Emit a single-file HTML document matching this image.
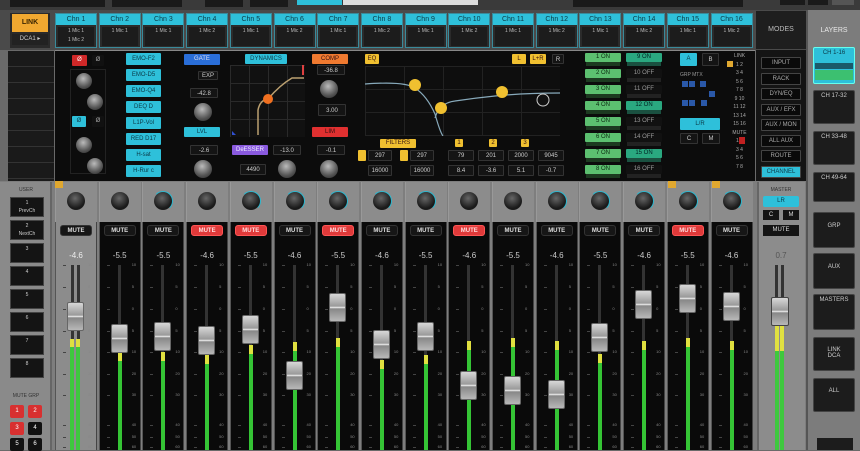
<!DOCTYPE html><html><head><meta charset="utf-8"><style>
*{box-sizing:border-box;margin:0;padding:0}
body{width:860px;height:450px;overflow:hidden;background:#6a6a6a;font-family:"Liberation Sans",sans-serif;position:relative}
.a{position:absolute}
.t{font-size:7px;color:#ddd;text-align:center;white-space:nowrap}
.cy{background:#2ec0da;color:#0b3a48}
.btn{position:absolute;font-size:6px;text-align:center;line-height:11px;border-radius:1px}
.knob{position:absolute;border-radius:50%;background:radial-gradient(circle at 45% 35%,#bbb,#555 60%,#222);}
.dk{position:absolute;border-radius:50%;background:radial-gradient(circle at 45% 35%,#666,#1a1a1a 65%);}
</style></head><body>
<div class="a" style="left:0;top:0;width:860px;height:10px;background:#3a3a3a"></div>
<div class="a" style="left:10px;top:0;width:95px;height:7px;background:#1a1a1a"></div>
<div class="a" style="left:112px;top:0;width:70px;height:7px;background:#1a1a1a"></div>
<div class="a" style="left:205px;top:0;width:38px;height:7px;background:#1a1a1a"></div>
<div class="a" style="left:250px;top:0;width:38px;height:7px;background:#1a1a1a"></div>
<div class="a" style="left:297px;top:0;width:45px;height:5px;background:#2ec0da"></div>
<div class="a" style="left:343px;top:0;width:90px;height:5px;background:#ddd"></div>
<div class="a" style="left:433px;top:0;width:45px;height:5px;background:#ddd"></div>
<div class="a" style="left:573px;top:0;width:170px;height:7px;background:#1a1a1a"></div>
<div class="a" style="left:780px;top:0;width:25px;height:5px;background:#1a1a1a"></div>
<div class="a" style="left:808px;top:0;width:20px;height:5px;background:#1a1a1a"></div>
<div class="a" style="left:832px;top:0;width:22px;height:5px;background:#555"></div>
<div class="a" style="left:0;top:10px;width:808px;height:40px;background:#4a4a4a"></div>
<div class="a" style="left:10px;top:13px;width:40px;height:35px;background:#2a2a2a"></div>
<div class="a t" style="left:12px;top:14px;width:36px;height:18px;background:#f0a830;color:#3a2500;line-height:18px;font-weight:bold">LINK</div>
<div class="a t" style="left:12px;top:34px;width:36px;height:11px;background:#222;color:#ccc;line-height:11px;font-size:6px">DCA1 ▸</div>
<div id="tabs"></div>
<div class="a" style="left:756px;top:11px;width:50px;height:38px;background:#1e1e1e"></div>
<div class="a t" style="left:756px;top:26px;width:50px;font-size:7px;color:#bbb">MODES</div>
<div class="a" style="left:8px;top:51px;width:46px;height:130px;background:#1a1a1a;background-image:repeating-linear-gradient(#1a1a1a 0 15px,#333 15px 16px)"></div>
<div class="a" style="left:55px;top:50px;width:700px;height:131px;background:#0c0c0c;border-top:1px solid #888"></div>
<div id="mid"></div>
<div class="a" style="left:756px;top:50px;width:50px;height:131px;background:#141414"></div>
<div id="modes"></div>
<div class="a" style="left:806px;top:10px;width:54px;height:440px;background:#7c7c7c;border-left:2px solid #555"></div>
<div class="a t" style="left:808px;top:27px;width:52px;color:#e8e8e8;font-size:7px">LAYERS</div>
<div id="layers"></div>
<div class="a" style="left:0;top:181px;width:806px;height:269px;background:#7e7e7e"></div>
<div class="a" style="left:0;top:182px;width:52px;height:268px;background:#8a8a8a;border-right:2px solid #666"></div>
<div class="a t" style="left:0;top:187px;width:52px;font-size:5px;color:#333">USER</div>
<div class="a t" style="left:0;top:393px;width:52px;font-size:5px;color:#333">MUTE GRP</div>
<div id="user"></div>
<div id="strips"></div>
<script>
function h(p,s){document.getElementById(p).insertAdjacentHTML('beforeend',s)}
var mics=['1 Mic 1','1 Mic 1','1 Mic 1','1 Mic 2','1 Mic 1','1 Mic 2','1 Mic 1','1 Mic 2','1 Mic 1','1 Mic 2','1 Mic 1','1 Mic 2','1 Mic 1','1 Mic 2','1 Mic 1','1 Mic 2'];
for(var i=0;i<16;i++){var x=55+i*43.7;
h('tabs','<div class="a" style="left:'+x+'px;top:13px;width:42px;height:35px;background:#2b2b2b;border:1px solid #3a8a9a"></div><div class="a t cy" style="left:'+(x+1)+'px;top:14px;width:40px;height:11px;line-height:11px;font-size:7px">Chn '+(i+1)+'</div><div class="a t" style="left:'+(x+3)+'px;top:27px;width:36px;height:19px;background:#1c1c1c;font-size:5px;line-height:9px;color:#bbb">'+mics[i]+(i==0?'<br>1 Mic 2':'')+'</div>');}
var md=['INPUT','RACK','DYN/EQ','AUX / EFX','AUX / MON','ALL AUX','ROUTE','CHANNEL'];
md.forEach(function(m,k){h('modes','<div class="btn" style="left:761px;top:'+(57+k*15.5)+'px;width:40px;height:12px;background:'+(k==7?'#2ec0da':'#0a0a0a')+';border:1px solid #444;color:'+(k==7?'#0b3a48':'#aaa')+'">'+m+'</div>')});
var L=[['CH 1-16',47,37,1],['CH 17-32',90,34],['CH 33-48',131,34],['CH 49-64',172,30],['GRP',212,36],['AUX',253,36],['MASTERS',294,36],['LINK<br>DCA',337,34],['ALL',378,34]];
L.forEach(function(l){h('layers','<div class="a" style="left:813px;top:'+l[1]+'px;width:42px;height:'+l[2]+'px;background:'+(l[3]?'#2ec0da':'#1c1c1c')+';border:1px solid '+(l[3]?'#6fe':'#444')+';border-radius:2px"></div><div class="a t" style="left:813px;top:'+(l[1]+(l[0].length<5||l[0].indexOf('<br>')>0?Math.max(3,l[2]/2-7):3))+'px;width:42px;font-size:6px;color:'+(l[3]?'#0b3a48':'#ccc')+'">'+l[0]+'</div>')});
h('layers','<div class="a" style="left:815px;top:63px;width:38px;height:6px;background:#1a5a6a"></div><div class="a" style="left:815px;top:70px;width:38px;height:10px;background:#3cc070"></div>');
h('layers','<div class="a" style="left:817px;top:438px;width:36px;height:12px;background:#1c1c1c"></div>');
var ul=['1<br>PrevCh','2<br>NextCh','3','4','5','6','7','8'];
ul.forEach(function(u,k){h('user','<div class="a t" style="left:10px;top:'+(197+k*23)+'px;width:34px;height:20px;background:#141414;border:1px solid #444;font-size:5px;line-height:8px;color:#ccc;padding-top:1px">'+u+'</div>')});
[[10,405,'1',1],[28,405,'2',1],[10,422,'3',1],[28,422,'4',0],[10,438,'5',0],[28,438,'6',0]].forEach(function(b){h('user','<div class="a t" style="left:'+b[0]+'px;top:'+b[1]+'px;width:14px;height:13px;background:'+(b[3]?'#d83030':'#111')+';border-radius:2px;line-height:13px;font-size:6px;color:#fff">'+b[2]+'</div>')});
var fad=[316,338,336,340,329,375,307,344,336,385,390,394,337,304,298,306];
var met=[339,352,352,355,345,342,338,360,355,341,338,341,354,341,338,341];
var red=[0,0,0,1,1,0,1,0,0,1,0,0,0,0,1,0];
var cyan=[0,0,1,0,1,1,1,1,1,0,0,1,1,1,1,1];
var vals=['-4.6','-5.5','-5.5','-4.6','-5.5','-4.6','-5.5','-4.6','-5.5','-4.6','-5.5','-4.6','-5.5','-4.6','-5.5','-4.6'];
var ticks=[[265,'10'],[287,'5'],[309,'0'],[331,'5'],[352,'10'],[374,'20'],[395,'30'],[425,'40'],[437,'50'],[447,'60']];
for(var i=0;i<16;i++){var x=55+i*43.7,w=42,sel=i==0;
var s='<div class="a" style="left:'+x+'px;top:182px;width:'+w+'px;height:40px;background:#8c8c8c;border-left:1px solid #999"></div>';
s+='<div class="a" style="left:'+x+'px;top:222px;width:'+w+'px;height:228px;background:'+(sel?'#8c8c8c':'#0a0a0a')+';border-left:1px solid #555;border-right:1px solid #444"></div>';
var kx=x+w/2-9;
if(cyan[i])s+='<div class="a" style="left:'+(kx-1)+'px;top:191px;width:20px;height:20px;border-radius:50%;border:2px solid #2ab8d0;border-left-color:transparent;border-bottom-color:transparent"></div>';
s+='<div class="dk" style="left:'+kx+'px;top:192px;width:18px;height:18px"></div>';
s+='<div class="a t" style="left:'+(x+5)+'px;top:225px;width:'+(w-10)+'px;height:11px;line-height:11px;border-radius:3px;font-size:6px;font-weight:bold;background:'+(red[i]?'#e03a3a':'#161616')+';color:'+(red[i]?'#fdd':'#ddd')+';border:1px solid '+(red[i]?'#f55':'#333')+'">MUTE</div>';
s+='<div class="a t" style="left:'+x+'px;top:251px;width:'+w+'px;font-size:8px;color:'+(sel?'#eee':'#ccc')+'">'+vals[i]+'</div>';
var cx=x+w/2;
ticks.forEach(function(t){s+='<div class="a" style="left:'+(x+w-9)+'px;top:'+(t[0]-3)+'px;font-size:4px;color:#888">'+t[1]+'</div><div class="a" style="left:'+(x+8)+'px;top:'+t[0]+'px;width:3px;height:1px;background:#444"></div>'});
if(sel){s+='<div class="a" style="left:'+(cx-5)+'px;top:265px;width:3px;height:185px;background:#333"></div><div class="a" style="left:'+(cx+1)+'px;top:265px;width:3px;height:185px;background:#333"></div>';
s+='<div class="a" style="left:'+(cx-6)+'px;top:'+met[i]+'px;width:4px;height:'+(450-met[i])+'px;background:linear-gradient(#e0e040 0 8px,#3ec83e 8px)"></div><div class="a" style="left:'+(cx)+'px;top:'+met[i]+'px;width:4px;height:'+(450-met[i])+'px;background:linear-gradient(#e0e040 0 8px,#3ec83e 8px)"></div>';}
else{s+='<div class="a" style="left:'+(cx-2)+'px;top:265px;width:3px;height:185px;background:#333"></div>';
s+='<div class="a" style="left:'+(cx-2)+'px;top:'+met[i]+'px;width:4px;height:'+(450-met[i])+'px;background:linear-gradient(#e0e040 0 9px,#35c435 9px)"></div>';}
s+='<div class="a" style="left:'+(cx-9)+'px;top:'+(fad[i]-14)+'px;width:17px;height:29px;border-radius:2px;background:linear-gradient(#d8d8d8,#9a9a9a 45%,#eee 50%,#888 55%,#b8b8b8);border:1px solid #666"></div>';
h('strips',s);}
var m='<div class="a" style="left:757px;top:182px;width:48px;height:268px;background:#8c8c8c;border-left:2px solid #666"></div>';
m+='<div class="a t" style="left:757px;top:187px;width:48px;font-size:5px;color:#333">MASTER</div>';
m+='<div class="a t" style="left:763px;top:196px;width:36px;height:11px;background:#2ec0da;color:#0b3a48;line-height:11px;font-size:6px;border-radius:2px">LR</div>';
m+='<div class="a t" style="left:763px;top:210px;width:16px;height:10px;background:#141414;line-height:10px;font-size:6px">C</div><div class="a t" style="left:783px;top:210px;width:16px;height:10px;background:#141414;line-height:10px;font-size:6px">M</div>';
m+='<div class="a t" style="left:763px;top:225px;width:36px;height:11px;background:#141414;line-height:11px;font-size:6px">MUTE</div>';
m+='<div class="a t" style="left:757px;top:251px;width:48px;font-size:8px;color:#555">0.7</div>';
m+='<div class="a" style="left:775px;top:265px;width:3px;height:185px;background:#333"></div><div class="a" style="left:781px;top:265px;width:3px;height:185px;background:#333"></div>';
m+='<div class="a" style="left:775px;top:326px;width:4px;height:124px;background:linear-gradient(#e0e040 0 25px,#3ec83e 25px)"></div><div class="a" style="left:780px;top:326px;width:4px;height:124px;background:linear-gradient(#e0e040 0 25px,#3ec83e 25px)"></div>';
m+='<div class="a" style="left:771px;top:297px;width:18px;height:29px;border-radius:2px;background:linear-gradient(#d8d8d8,#9a9a9a 45%,#eee 50%,#888 55%,#b8b8b8);border:1px solid #444"></div>';
h('strips',m);
h('strips','<div class="a" style="left:55px;top:181px;width:8px;height:7px;background:#e0a830"></div><div class="a" style="left:668px;top:181px;width:8px;height:7px;background:#e0a830"></div><div class="a" style="left:712px;top:181px;width:8px;height:7px;background:#e0a830"></div>');
var M='';
function B(x,y,w,hh,bg,col,tx){M+='<div class="btn" style="left:'+x+'px;top:'+y+'px;width:'+w+'px;height:'+hh+'px;line-height:'+hh+'px;background:'+bg+';color:'+col+'">'+tx+'</div>'}
function K(x,y,s){M+='<div class="knob" style="left:'+x+'px;top:'+y+'px;width:'+s+'px;height:'+s+'px"></div>'}
function D(x,y,w,hh,tx){M+='<div class="btn" style="left:'+x+'px;top:'+y+'px;width:'+w+'px;height:'+hh+'px;line-height:'+hh+'px;background:#141414;border:1px solid #333;color:#ccc">'+tx+'</div>'}
M+='<div class="a" style="left:70px;top:69px;width:36px;height:105px;border:1px solid #222"></div>';
B(72,55,15,11,'#d02828','#fff','Ø');B(92,55,12,11,'#111','#aaa','Ø');
K(76,73,16);K(87,94,16);B(72,116,14,11,'#2ec0da','#0b3a48','Ø');B(92,116,12,11,'#111','#aaa','Ø');K(76,137,16);K(87,158,16);
['EMO-F2','EMO-D5','EMO-Q4','DEQ D','L1P-Vol','RED D17','H-sat','H-Rur c'].forEach(function(t,k){B(126,53+k*16,35,12,'#2ec0da','#0b3a48',t)});
B(184,54,36,11,'#2a6ed8','#dde','GATE');B(245,54,42,10,'#2ec0da','#0b3a48','DYNAMICS');B(312,54,36,10,'#f07a30','#311','COMP');
D(198,71,20,9,'EXP');D(190,88,28,10,'-42.8');K(194,103,18);B(184,127,36,10,'#2ec0da','#0b3a48','LVL');D(190,145,28,10,'-2.6');K(194,160,18);
M+='<div class="a" style="left:230px;top:65px;width:75px;height:72px;background:#111;background-image:linear-gradient(#2a2a2a 1px,transparent 1px),linear-gradient(90deg,#2a2a2a 1px,transparent 1px);background-size:19px 18px"></div>';
M+='<svg class="a" style="left:230px;top:65px" width="75" height="72"><path d="M28 70 V45 Q30 35 38 34 Q50 20 62 13 H74" stroke="#bba070" stroke-width="1.5" fill="none"/><circle cx="38" cy="34" r="5" fill="#f07020"/><rect x="72" y="0" width="2" height="10" fill="#e04040"/><path d="M2 66 l4 4 h-4z" fill="#3050d0"/></svg>';
D(317,65,28,10,'-36.8');K(320,80,18);D(318,104,28,12,'3.00');B(312,127,36,10,'#e03030','#311','LIM');
B(232,145,36,10,'#8a5adf','#eef','DeESSER');D(240,164,26,11,'4490');D(273,145,28,10,'-13.0');K(278,160,18);D(317,145,28,10,'-0.1');K(320,160,18);
B(365,54,14,10,'#f0c030','#311','EQ');B(512,54,14,10,'#f0c030','#311','L');B(530,54,16,10,'#f0c030','#311','L+R');D(552,54,12,10,'R');
M+='<div class="a" style="left:365px;top:66px;width:195px;height:70px;background:#0e0e0e;background-image:linear-gradient(#222 1px,transparent 1px),linear-gradient(90deg,#222 1px,transparent 1px);background-size:39px 23px"></div>';
M+='<svg class="a" style="left:365px;top:66px" width="195" height="70"><path d="M0 18 Q40 15 50 22 Q62 30 70 48 Q75 66 78 70" stroke="#8ab" stroke-width="1.2" fill="none"/><path d="M70 52 Q74 37 90 35 Q110 32 130 30 Q160 27 195 27" stroke="#8ab" stroke-width="1.2" fill="none"/><circle cx="50" cy="19" r="6" fill="#f0c030"/><circle cx="76" cy="42" r="6" fill="#f0c030"/><circle cx="137" cy="26" r="6" fill="#f0c030"/><circle cx="178" cy="34" r="6" fill="#111" stroke="#ccc"/></svg>';
B(380,139,36,9,'#f0c030','#311','FILTERS');B(455,139,8,8,'#f0c030','#311','1');B(489,139,8,8,'#f0c030','#311','2');B(521,139,8,8,'#f0c030','#311','3');
B(358,150,8,11,'#f0c030','#311','');D(368,150,24,11,'297');B(400,150,8,11,'#f0c030','#311','');D(410,150,24,11,'297');D(448,150,26,11,'79');D(478,150,26,11,'201');D(508,150,26,11,'2000');D(538,150,26,11,'9045');
D(368,165,24,11,'16000');D(410,165,24,11,'16000');D(448,165,26,11,'8.4');D(478,165,26,11,'-3.6');D(508,165,26,11,'5.1');D(538,165,26,11,'-0.7');
for(var k=0;k<8;k++){var y=53+k*16;B(585,y,36,9,'#5cc070','#0a2a10',(k+1)+' ON');M+='<div class="a" style="left:586px;top:'+(y+9)+'px;width:34px;height:4px;background:#1c3a20"></div>';
var on2=(k==0||k==3||k==6);B(626,y,36,9,on2?'#2aa880':'#111',on2?'#022':'#999',(k+9)+(on2?' ON':' OFF'));M+='<div class="a" style="left:627px;top:'+(y+9)+'px;width:34px;height:4px;background:'+(on2?'#1a5040':'#222')+'"></div>';}
B(680,53,17,13,'#2ec0da','#0b3a48','A');D(702,53,17,13,'B');
M+='<div class="a" style="left:680px;top:72px;width:40px;height:38px;font-size:5px;color:#999">GRP MTX</div>';
[[682,81],[689,81],[700,81],[682,100],[689,100],[701,100],[709,91]].forEach(function(p){M+='<div class="a" style="left:'+p[0]+'px;top:'+p[1]+'px;width:6px;height:6px;background:#2a58a8"></div>'});
B(680,118,40,12,'#2ec0da','#0b3a48','L/R');D(680,133,18,11,'C');D(702,133,18,11,'M');
M+='<div class="a" style="left:727px;top:52px;width:25px;height:125px;font-size:5px;color:#aaa;line-height:8.5px;text-align:center">LINK<br>1 2<br>3 4<br>5 6<br>7 8<br>9 10<br>11 12<br>13 14<br>15 16<br>MUTE<br>1 2<br>3 4<br>5 6<br>7 8</div>';
M+='<div class="a" style="left:727px;top:61px;width:6px;height:6px;background:#e0a830"></div><div class="a" style="left:739px;top:137px;width:6px;height:7px;background:#c02020"></div>';
h('mid',M);
</script>
</body></html>
